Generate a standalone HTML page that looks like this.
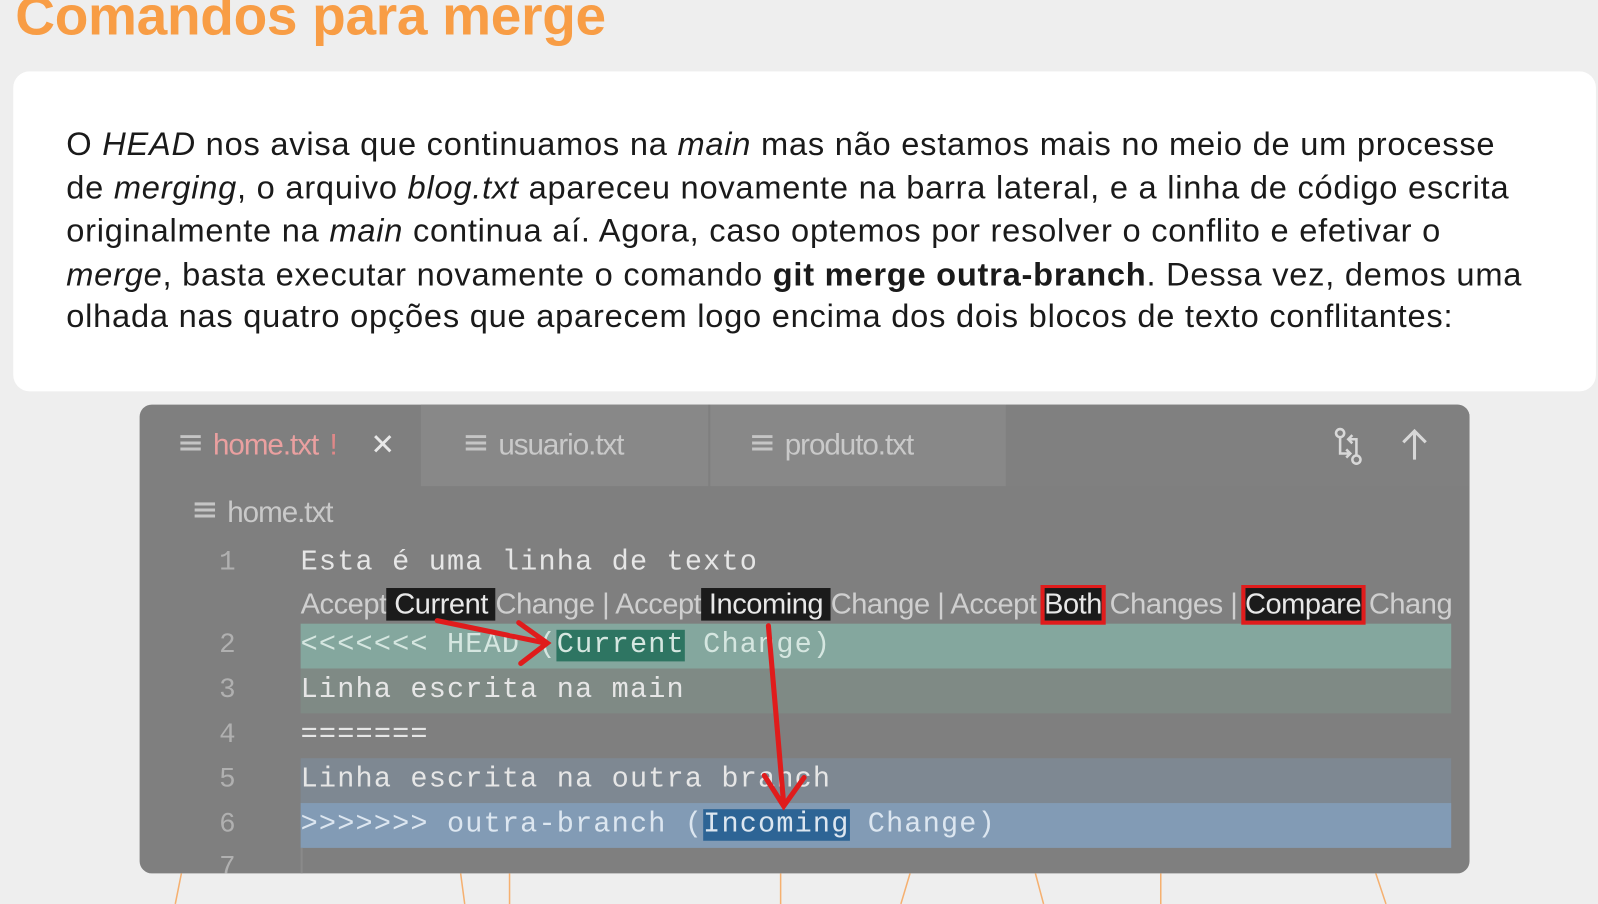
<!DOCTYPE html>
<html><head><meta charset="utf-8"><style>
*{margin:0;padding:0;box-sizing:border-box}
body{width:1598px;height:887px;background:#eeeeee;position:relative;overflow:hidden;font-family:"Liberation Sans",sans-serif}
#w{position:absolute;left:0;top:0;width:1568px;height:870px;transform:scale(1.0191);transform-origin:0 0}
.title{position:absolute;left:15px;top:-15px;font-size:54px;font-weight:bold;color:#f89d45;white-space:nowrap;letter-spacing:-0.3px}
.card{position:absolute;left:13px;top:70px;width:1553px;height:314px;background:#fff;border-radius:16px}
.p{position:absolute;left:65px;font-size:32px;color:#1a1a1a;white-space:nowrap;line-height:1;letter-spacing:0.75px}
.ed{position:absolute;left:137px;top:397px;width:1305px;height:460px;background:#7f7f7f;border-radius:12px;overflow:hidden}
.tab{position:absolute;top:0;height:80px;font-size:29px;color:#c9c9c9;letter-spacing:-1px;line-height:80px}
.ic{display:inline-block;width:20px;height:20px;vertical-align:-1px;margin-right:12px;background:linear-gradient(#c5c5c5 0 3px,transparent 3px 6px,#c5c5c5 6px 9px,transparent 9px 12px,#c5c5c5 12px 15px,transparent 15px 18px);background-size:100% 100%;}
.code{position:absolute;font-family:"Liberation Mono",monospace;font-size:28px;color:#e6e6e6;white-space:pre;line-height:44px;letter-spacing:1.15px}
.ln{position:absolute;left:78px;width:30px;font-family:"Liberation Mono",monospace;font-size:27px;color:#b0b0b0;line-height:44px}
.band{position:absolute;left:158px;width:1129px;height:44px}
.lens{position:absolute;left:158px;top:177px;width:1129px;overflow:hidden;height:40px;padding-top:2px;font-size:28.5px;color:#cfcfcf;white-space:pre;line-height:34px;letter-spacing:-0.45px}
.bk{background:#1b1b1b;color:#e8e8e8}
.rb{outline:4px solid #e01c1c;outline-offset:0}
</style></head><body><div id="w">
<div class="title">Comandos para merge</div>
<div class="card"></div>
<div class="p" style="top:125px">O <i>HEAD</i> nos avisa que continuamos na <i>main</i> mas não estamos mais no meio de um processe</div>
<div class="p" style="top:168px">de <i>merging</i>, o arquivo <i>blog.txt</i> apareceu novamente na barra lateral, e a linha de código escrita</div>
<div class="p" style="top:210px">originalmente na <i>main</i> continua aí. Agora, caso optemos por resolver o conflito e efetivar o</div>
<div class="p" style="top:253px"><i>merge</i>, basta executar novamente o comando <b>git merge outra-branch</b>. Dessa vez, demos uma</div>
<div class="p" style="top:294px">olhada nas quatro opções que aparecem logo encima dos dois blocos de texto conflitantes:</div>

<div class="ed">
  <div style="position:absolute;left:276px;top:0;width:574px;height:80px;background:#888"></div>
  <div style="position:absolute;left:558px;top:0;width:2px;height:80px;background:#7f7f7f"></div>
  <div style="position:absolute;left:850px;top:0;width:455px;height:80px;background:#808080"></div>
  <div class="tab" style="left:40px;color:#eaa0a0"><span class="ic"></span>home.txt <span style="color:#e08888;margin-left:4px">!</span> <span style="color:#e8e8e8;margin-left:26px">✕</span></div>
  <div class="tab" style="left:320px"><span class="ic"></span>usuario.txt</div>
  <div class="tab" style="left:601px"><span class="ic"></span>produto.txt</div>
  <svg style="position:absolute;left:1170px;top:22px" width="40" height="40" viewBox="0 0 40 40" fill="none" stroke="#d8d8d8" stroke-width="2.5"><circle cx="8" cy="6" r="4"/><path d="M8 10v16h10M14 22l4 4-4 4"/><circle cx="24" cy="32" r="4"/><path d="M24 28V12H16M20 8l-4 4 4 4"/></svg>
  <svg style="position:absolute;left:1236px;top:22px" width="30" height="36" viewBox="0 0 30 36" fill="none" stroke="#d8d8d8" stroke-width="3"><path d="M15 32V4M4 15L15 4l11 11"/></svg>
  <div class="tab" style="left:54px;top:66px;height:80px;line-height:80px"><span class="ic"></span>home.txt</div>

  <div class="band" style="top:215px;background:#84a79e"></div>
  <div class="band" style="top:259px;background:#7f8a85"></div>
  <div class="band" style="top:347px;background:#7e8892"></div>
  <div class="band" style="top:391px;background:#829bb5"></div>
  <div style="position:absolute;left:158px;top:435px;width:2px;height:30px;background:#8a8a8a"></div>

  <div class="ln" style="top:134px">1</div>
  <div class="ln" style="top:215px">2</div>
  <div class="ln" style="top:259px">3</div>
  <div class="ln" style="top:303px">4</div>
  <div class="ln" style="top:347px">5</div>
  <div class="ln" style="top:391px">6</div>
  <div class="ln" style="top:433px">7</div>

  <div class="code" style="left:158px;top:134px">Esta é uma linha de texto</div>
  <div class="lens">Accept<span class="bk"> Current </span>Change | Accept<span class="bk"> Incoming </span>Change | Accept <span class="bk rb">Both</span> Changes | <span class="bk rb">Compare</span> Change</div>
  <div class="code" style="left:158px;top:215px;color:#d5e6e0">&lt;&lt;&lt;&lt;&lt;&lt;&lt; HEAD (<span style="background:#2e7562">Current</span> Change)</div>
  <div class="code" style="left:158px;top:259px">Linha escrita na main</div>
  <div class="code" style="left:158px;top:303px">=======</div>
  <div class="code" style="left:158px;top:347px">Linha escrita na outra branch</div>
  <div class="code" style="left:158px;top:391px;color:#dce6f0">&gt;&gt;&gt;&gt;&gt;&gt;&gt; outra-branch (<span style="background:#2d6495">Incoming</span> Change)</div>
  <svg style="position:absolute;left:0;top:0" width="1305" height="460" fill="none" stroke="#e01c1c" stroke-width="5" stroke-linecap="round"><path d="M292 212L398 234M372 214L400 234L374 254"/><path d="M617 217L632 392M613 364L632 394L652 366"/></svg>
</div>
<svg style="position:absolute;left:0;top:857px" width="1598" height="30" stroke="#f5b070" stroke-width="1.5"><path d="M178 0L172 30M452 0L456 30M500 0V30M766 0V30M893 0L884 30M1016 0L1024 30M1139 0V30M1350 0L1360 30"/></svg>
</div></body></html>
